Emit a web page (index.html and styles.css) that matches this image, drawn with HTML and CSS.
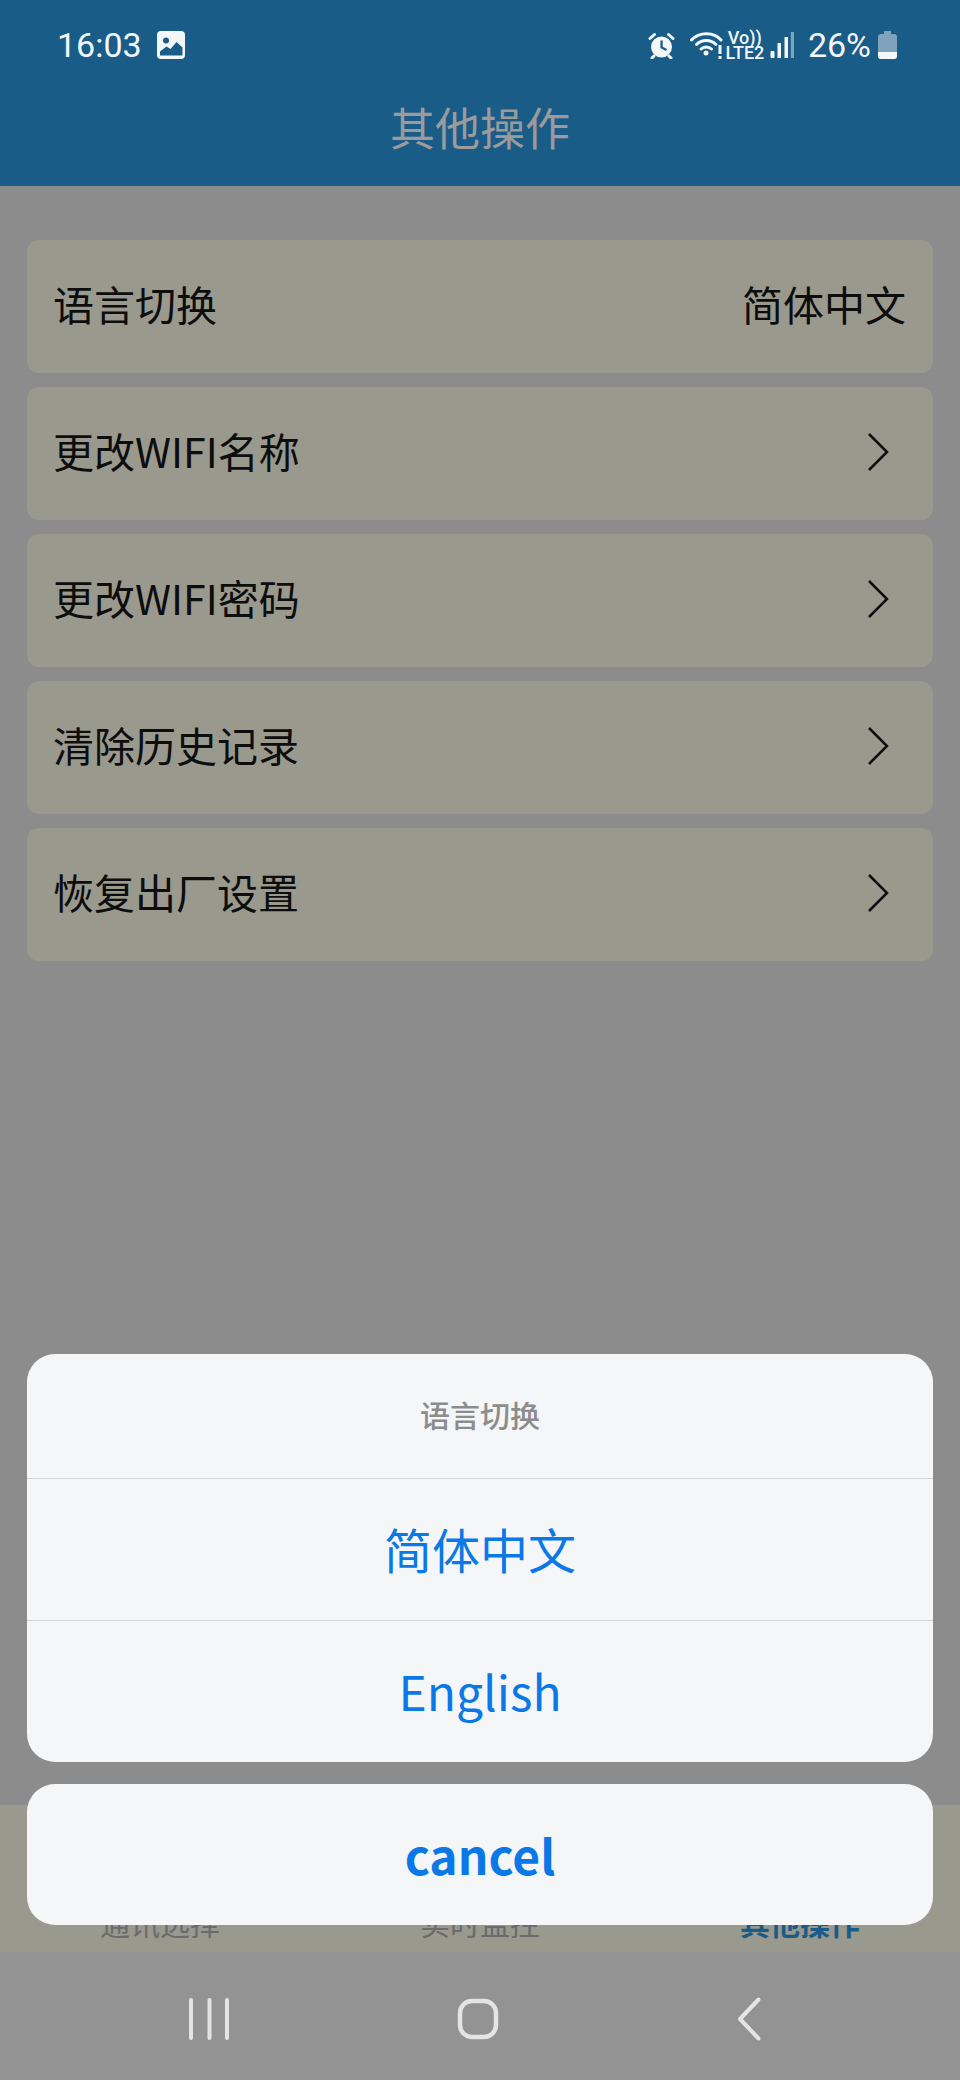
FILE: index.html
```html
<!DOCTYPE html>
<html lang="zh-CN">
<head>
<meta charset="utf-8">
<title>其他操作</title>
<link rel="stylesheet" href="styles.css">
</head>
<body>
<div class="app">
  <header class="header">
    <div class="status">
      <div class="status-left">
        <span class="time">16:03</span>
        <svg class="ic-image" width="28" height="28" viewBox="0 0 28 28"><path fill="#f3f7fa" fill-rule="evenodd" d="M4 0h20a4 4 0 0 1 4 4v20a4 4 0 0 1-4 4H4a4 4 0 0 1-4-4V4a4 4 0 0 1 4-4zM9 6.500a3 3 0 1 0 0 6 3 3 0 0 0 0-6zM3 24.500h22.500V16.500l-6-5.500-6 7-4-2.500-6.500 5z"/></svg>
      </div>
      <div class="status-right">
        <svg class="ic-alarm" width="27" height="27" viewBox="0 0 27 27"><path fill="#f3f7fa" fill-rule="evenodd" d="M13.500 4.500a10.500 10.500 0 1 1 0 21 10.500 10.500 0 0 1 0-21zM12.400 8.500v7.500l5.600 3 1-1.900-4.300-2.300V8.500z"/><path stroke="#f3f7fa" stroke-width="3" stroke-linecap="round" fill="none" d="M2 6.500 6.500 2.500M25 6.500 20.500 2.500M6 24l-2 2M21 24l2 2"/></svg>
        <svg class="ic-wifi" width="33" height="28" viewBox="0 0 33 28"><g fill="none" stroke="#f3f7fa" stroke-width="3" stroke-linecap="round"><path d="M1.500 9C9 .5 24 .5 31 9"/><path d="M6.500 13.500c5-5.500 14.500-5.500 19.500 0"/><path d="M11 18c2.800-2.800 7.500-2.800 10.500 0"/></g><circle cx="16" cy="22" r="2.500" fill="#f3f7fa"/><rect x="28.500" y="14" width="3" height="9" fill="#f3f7fa"/><rect x="28.500" y="25" width="3" height="3" fill="#f3f7fa"/></svg>
        <div class="volte"><span class="vo">Vo))</span><span class="lte">LTE2</span></div>
        <svg class="ic-signal" width="24" height="26" viewBox="0 0 24 26"><rect x="0.500" y="19" width="4" height="7" rx="1" fill="#f3f7fa"/><rect x="7.500" y="11" width="3.500" height="15" fill="#f3f7fa"/><rect x="14.500" y="5" width="3.500" height="21" fill="#f3f7fa"/><rect x="20.800" y="0" width="3.200" height="26" fill="#7fa3bd"/></svg>
        <span class="pct">26%</span>
        <svg class="ic-battery" width="19" height="28" viewBox="0 0 19 28"><path fill="#7fa3bd" d="M6 0h7v3h3a3 3 0 0 1 3 3v19a3 3 0 0 1-3 3H3a3 3 0 0 1-3-3V6a3 3 0 0 1 3-3h3z"/><path fill="#f3f7fa" d="M0 21h19v4a3 3 0 0 1-3 3H3a3 3 0 0 1-3-3z"/></svg>
      </div>
    </div>
    <h1 class="title">其他操作</h1>
  </header>

  <main class="content">
    <div class="row"><span class="label">语言切换</span><span class="label">简体中文</span></div>
    <div class="row"><span class="label">更改WIFI名称</span><svg class="chev" width="22" height="38" viewBox="0 0 22 38"><path d="M2 1l18 18L2 37" fill="none" stroke="#0d0d0d" stroke-width="2.500"/></svg></div>
    <div class="row"><span class="label">更改WIFI密码</span><svg class="chev" width="22" height="38" viewBox="0 0 22 38"><path d="M2 1l18 18L2 37" fill="none" stroke="#0d0d0d" stroke-width="2.500"/></svg></div>
    <div class="row"><span class="label">清除历史记录</span><svg class="chev" width="22" height="38" viewBox="0 0 22 38"><path d="M2 1l18 18L2 37" fill="none" stroke="#0d0d0d" stroke-width="2.500"/></svg></div>
    <div class="row"><span class="label">恢复出厂设置</span><svg class="chev" width="22" height="38" viewBox="0 0 22 38"><path d="M2 1l18 18L2 37" fill="none" stroke="#0d0d0d" stroke-width="2.500"/></svg></div>
  </main>

  <nav class="tabbar">
    <span class="tab">通讯选择</span>
    <span class="tab">实时监控</span>
    <span class="tab tab-active">其他操作</span>
  </nav>

  <div class="sysnav">
    <svg width="40" height="42" viewBox="0 0 40 42"><path d="M2 2v38M20.500 2v38M38 2v38" stroke="#e4e4e4" stroke-width="4" stroke-linecap="round" fill="none"/></svg>
    <svg width="42" height="42" viewBox="0 0 42 42"><rect x="3" y="3" width="36" height="36" rx="12" stroke="#e4e4e4" stroke-width="4.500" fill="none"/></svg>
    <svg class="nav-back" width="24" height="44" viewBox="0 0 24 44"><path d="M21.500 2.500 3 22l18.500 19.500" stroke="#e4e4e4" stroke-width="4" stroke-linecap="round" stroke-linejoin="round" fill="none"/></svg>
  </div>

  <div class="sheet">
    <div class="sheet-group">
      <div class="sheet-title">语言切换</div>
      <div class="sheet-option">简体中文</div>
      <div class="sheet-option">English</div>
    </div>
    <div class="sheet-cancel">cancel</div>
  </div>
</div>
</body>
</html>
```

FILE: styles.css
```css
* { box-sizing: border-box; }
html, body { margin: 0; padding: 0; }
body {
  font-family: "Noto Sans CJK SC", sans-serif;
  background: #8c8c8c;
}
.app {
  position: relative;
  width: 960px;
  height: 2080px;
  display: flex;
  flex-direction: column;
  background: #8c8c8c;
  overflow: hidden;
}
.header {
  height: 186px;
  background: #1a5c88;
  display: flex;
  flex-direction: column;
}
.status {
  height: 90px;
  padding: 0 63px 0 57px;
  display: flex;
  align-items: center;
  justify-content: space-between;
  color: #f3f7fa;
  font-family: Roboto, sans-serif;
}
.status-left, .status-right { display: flex; align-items: center; }
.time { font-size: 34px; line-height: 40px; }
.ic-image { margin-left: 15px; }
.status-right svg { flex: none; }
.ic-wifi { margin-left: 15px; }
.volte {
  margin-left: 4px;
  width: 36px;
  display: flex;
  flex-direction: column;
  align-items: center;
  font-weight: 500;
  font-size: 18px;
  line-height: 15px;
}
.ic-signal { margin-left: 7px; }
.pct { margin-left: 14px; font-size: 34px; line-height: 40px; }
.ic-battery { margin-left: 7px; }
.title {
  margin: 7px 0 0;
  text-align: center;
  font-size: 45px;
  line-height: 60px;
  font-weight: 400;
  color: #9b9b9b;
}
.content {
  flex: 1;
  padding: 54px 27px 0;
  display: flex;
  flex-direction: column;
  gap: 14px;
}
.row {
  height: 133px;
  padding: 0 27px 3px 26px;
  background: #99998e;
  border-radius: 12px;
  display: flex;
  align-items: center;
  justify-content: space-between;
  font-size: 41px;
  color: #0d0d0d;
}
.label { margin-bottom: 4px; }
.chev { margin-right: 17px; }
.tabbar {
  height: 147px;
  background: #99998e;
  display: grid;
  grid-template-columns: repeat(3, 1fr);
  align-items: end;
  padding-bottom: 10px;
  text-align: center;
  font-size: 30px;
  line-height: 40px;
  color: #6b6b6b;
}
.tab-active { color: #1a5c88; font-weight: 700; }
.sysnav {
  height: 128px;
  padding: 5px 0 0 189px;
  background: #939393;
  display: flex;
  gap: 228px;
  align-items: center;
}
.nav-back { margin-left: 10px; }
.sheet {
  position: absolute;
  left: 27px;
  right: 27px;
  bottom: 155px;
  display: flex;
  flex-direction: column;
  gap: 22px;
  text-align: center;
}
.sheet-group, .sheet-cancel {
  background: #f4f6f8;
  border-radius: 28px;
  overflow: hidden;
}
.sheet-title {
  height: 124px;
  padding-bottom: 4px;
  display: flex;
  align-items: center;
  justify-content: center;
  font-size: 30px;
  font-weight: 500;
  color: #8c8c8c;
}
.sheet-option {
  height: 142px;
  padding-bottom: 3px;
  border-top: 1px solid #d3d4d6;
  display: flex;
  align-items: center;
  justify-content: center;
  font-size: 48px;
  color: #0a78e6;
}
.sheet-cancel {
  height: 141px;
  padding-bottom: 2px;
  display: flex;
  align-items: center;
  justify-content: center;
  font-size: 48px;
  font-weight: 700;
  color: #0a78e6;
}
```
